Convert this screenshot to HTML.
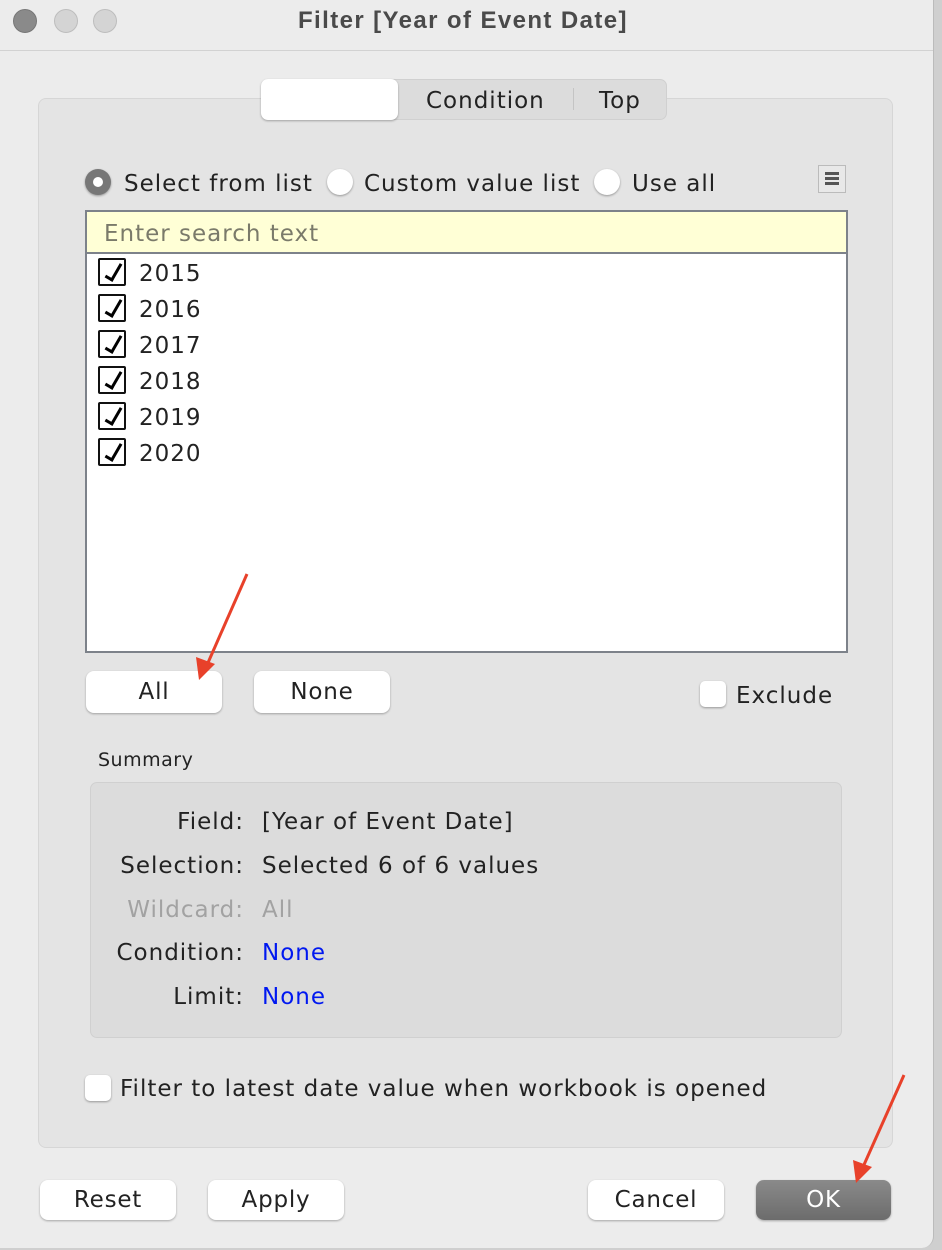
<!DOCTYPE html>
<html><head><style>
body{margin:0;width:942px;height:1250px;background:#cfcfcf;position:relative;overflow:hidden;font-family:"DejaVu Sans",sans-serif;color:#222}
.a{position:absolute}
.win{left:0;top:0;width:933px;height:1248px;background:#ececec;border-radius:0 0 12px 0;border-right:1px solid #bbb}
.tl{width:24px;height:24px;border-radius:50%;top:9px;background:#d4d4d4;border:1px solid #bdbdbd;box-sizing:border-box}
.t{font-size:23px;letter-spacing:1px;white-space:nowrap;margin-top:2px}
.btn{background:#fff;border-radius:8px;box-shadow:0 1px 2px rgba(0,0,0,.3);font-size:23px;letter-spacing:0.8px;text-align:center;box-sizing:border-box}
.cb{width:28px;height:28px;border:2px solid #111;box-sizing:border-box;background:#fff;border-radius:2px}
.cb:after{content:"";position:absolute;left:9px;top:1px;width:6px;height:17px;border:solid #000;border-width:0 3px 3px 0;transform:rotate(30deg)}
.ecb{width:26px;height:26px;background:#fff;border-radius:5px;box-shadow:0 1px 2px rgba(0,0,0,.35);box-sizing:border-box}
.rad{width:26px;height:26px;border-radius:50%;background:#fff;box-shadow:0 1px 2px rgba(0,0,0,.35)}
.lab{width:244px;text-align:right;left:0}
</style></head><body>
<div class="a win"></div>
<div class="a tl" style="left:13px;background:#8a8a8a;border-color:#777"></div>
<div class="a tl" style="left:54px"></div>
<div class="a tl" style="left:93px"></div>
<div class="a" style="left:298px;top:7px;font-family:'Liberation Sans',sans-serif;font-size:24px;letter-spacing:1.4px;font-weight:bold;color:#4a4a4a;white-space:nowrap">Filter [Year of Event Date]</div>
<div class="a" style="left:0;top:50px;width:933px;height:1px;background:#d2d2d2"></div>

<div class="a" style="left:38px;top:98px;width:855px;height:1050px;background:#e4e4e4;border:1px solid #d6d6d6;border-radius:8px;box-sizing:border-box"></div>
<div class="a" style="left:261px;top:79px;width:406px;height:41px;background:#dcdcdc;border-radius:7px;border:1px solid #d0d0d0;box-sizing:border-box"></div>
<div class="a" style="left:261px;top:79px;width:137px;height:41px;background:#fff;border-radius:7px;box-shadow:0 1px 2px rgba(0,0,0,.3)"></div>
<div class="a t" style="left:426px;top:86px">Condition</div>
<div class="a" style="left:573px;top:88px;width:1px;height:22px;background:#c4c4c4"></div>
<div class="a t" style="left:599px;top:86px">Top</div>

<div class="a rad" style="left:85px;top:169px;background:#777"></div>
<div class="a" style="left:93px;top:177px;width:10px;height:10px;border-radius:50%;background:#fff"></div>
<div class="a t" style="left:124px;top:169px">Select from list</div>
<div class="a rad" style="left:327px;top:169px"></div>
<div class="a t" style="left:364px;top:169px">Custom value list</div>
<div class="a rad" style="left:594px;top:169px"></div>
<div class="a t" style="left:632px;top:169px">Use all</div>
<div class="a" style="left:818px;top:165px;width:28px;height:28px;border:1px solid #bbb;background:#e8e8e8;box-sizing:border-box"></div>
<div class="a" style="left:825px;top:172px;width:14px;height:3px;background:#555;box-shadow:0 5px 0 #555,0 10px 0 #555"></div>

<div class="a" style="left:85px;top:210px;width:763px;height:443px;border:2px solid #7d828a;background:#fff;box-sizing:border-box"></div>
<div class="a" style="left:87px;top:212px;width:759px;height:40px;background:#ffffd6;border-bottom:2px solid #7d828a"></div>
<div class="a t" style="left:104px;top:219px;color:#7a7a6a">Enter search text</div>

<div class="a cb" style="left:98px;top:258px"></div><div class="a t" style="left:139px;top:259px">2015</div>
<div class="a cb" style="left:98px;top:294px"></div><div class="a t" style="left:139px;top:295px">2016</div>
<div class="a cb" style="left:98px;top:330px"></div><div class="a t" style="left:139px;top:331px">2017</div>
<div class="a cb" style="left:98px;top:366px"></div><div class="a t" style="left:139px;top:367px">2018</div>
<div class="a cb" style="left:98px;top:402px"></div><div class="a t" style="left:139px;top:403px">2019</div>
<div class="a cb" style="left:98px;top:438px"></div><div class="a t" style="left:139px;top:439px">2020</div>

<div class="a btn" style="left:86px;top:671px;width:136px;height:42px;line-height:42px">All</div>
<div class="a btn" style="left:254px;top:671px;width:136px;height:42px;line-height:42px">None</div>
<div class="a ecb" style="left:700px;top:681px"></div>
<div class="a t" style="left:736px;top:681px">Exclude</div>

<div class="a" style="left:98px;top:749px;font-size:19px;letter-spacing:0.5px">Summary</div>
<div class="a" style="left:90px;top:782px;width:752px;height:256px;background:#dcdcdc;border:1px solid #d0d0d0;border-radius:7px;box-sizing:border-box"></div>
<div class="a t lab" style="top:807px">Field:</div><div class="a t" style="left:262px;top:807px">[Year of Event Date]</div>
<div class="a t lab" style="top:851px">Selection:</div><div class="a t" style="left:262px;top:851px">Selected 6 of 6 values</div>
<div class="a t lab" style="top:895px;color:#a2a2a2">Wildcard:</div><div class="a t" style="left:262px;top:895px;color:#a2a2a2">All</div>
<div class="a t lab" style="top:938px">Condition:</div><div class="a t" style="left:262px;top:938px;color:#0018f0">None</div>
<div class="a t lab" style="top:982px">Limit:</div><div class="a t" style="left:262px;top:982px;color:#0018f0">None</div>

<div class="a ecb" style="left:85px;top:1075px"></div>
<div class="a t" style="left:120px;top:1074px">Filter to latest date value when workbook is opened</div>

<div class="a btn" style="left:40px;top:1180px;width:136px;height:40px;line-height:40px">Reset</div>
<div class="a btn" style="left:208px;top:1180px;width:136px;height:40px;line-height:40px">Apply</div>
<div class="a btn" style="left:588px;top:1180px;width:136px;height:40px;line-height:40px">Cancel</div>
<div class="a btn" style="left:756px;top:1180px;width:135px;height:40px;line-height:40px;background:linear-gradient(#8a8a8a,#6c6c6c);color:#fff">OK</div>

<svg class="a" style="left:0;top:0" width="942" height="1250">
<line x1="247" y1="574" x2="207" y2="665" stroke="#e8412a" stroke-width="3"/>
<polygon points="199,680 196,657 215,664" fill="#e8412a"/>
<line x1="904" y1="1075" x2="863" y2="1167" stroke="#e8412a" stroke-width="3"/>
<polygon points="856,1183 853,1160 872,1167" fill="#e8412a"/>
</svg>
</body></html>
